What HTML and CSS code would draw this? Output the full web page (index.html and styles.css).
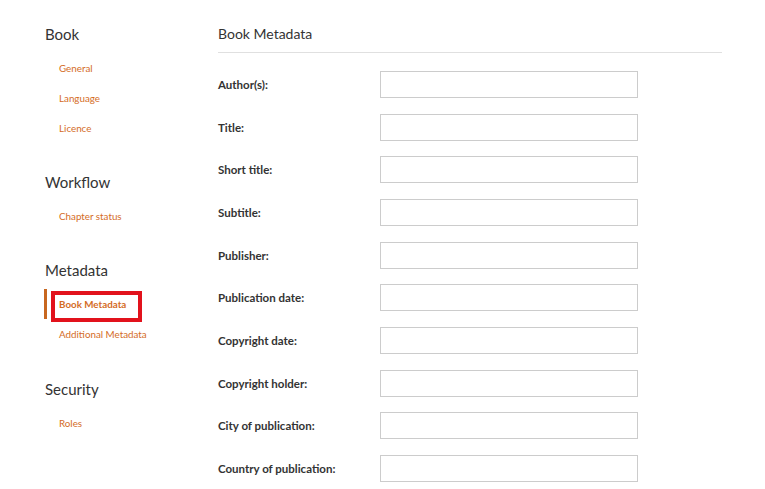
FILE: index.html
```html
<!DOCTYPE html>
<html>
<head>
<meta charset="utf-8">
<link rel="stylesheet" href="styles.css">
</head>
<body>
<div class="page">
  <nav class="sidebar">
    <div class="section">
      <h3 class="section-title">Book</h3>
      <ul class="links">
        <li><a class="link">General</a></li>
        <li><a class="link">Language</a></li>
        <li><a class="link">Licence</a></li>
      </ul>
    </div>
    <div class="section">
      <h3 class="section-title">Workflow</h3>
      <ul class="links">
        <li><a class="link">Chapter status</a></li>
      </ul>
    </div>
    <div class="section">
      <h3 class="section-title">Metadata</h3>
      <ul class="links">
        <li class="active"><a class="link"><span class="highlight">Book Metadata</span></a></li>
        <li><a class="link">Additional Metadata</a></li>
      </ul>
    </div>
    <div class="section last">
      <h3 class="section-title">Security</h3>
      <ul class="links">
        <li><a class="link">Roles</a></li>
      </ul>
    </div>
  </nav>
  <main class="main">
    <h2 class="page-title">Book Metadata</h2>
    <form class="form">
      <label class="label">Author(s):</label><input class="field" type="text">
      <label class="label">Title:</label><input class="field" type="text">
      <label class="label">Short title:</label><input class="field" type="text">
      <label class="label">Subtitle:</label><input class="field" type="text">
      <label class="label">Publisher:</label><input class="field" type="text">
      <label class="label">Publication date:</label><input class="field" type="text">
      <label class="label">Copyright date:</label><input class="field" type="text">
      <label class="label">Copyright holder:</label><input class="field" type="text">
      <label class="label">City of publication:</label><input class="field" type="text">
      <label class="label">Country of publication:</label><input class="field" type="text">
    </form>
  </main>
</div>
</body>
</html>
```
FILE: styles.css
```css
html, body {
  margin: 0;
  padding: 0;
  background: #fff;
  font-family: Lato, "Open Sans", sans-serif;
  color: #333;
}
.page {
  display: flex;
  height: 489px;
  overflow: hidden;
}
.sidebar {
  width: 218px;
  padding-left: 44px;
  box-sizing: border-box;
  flex: none;
}
.section {
  margin-top: 24px;
}
.section + .section {
  margin-top: 29px;
}
.section.last {
  margin-top: 30px;
}
.section-title {
  margin: 0;
  font-size: 15px;
  line-height: 20px;
  font-weight: 400;
  color: #333;
  padding-left: 1px;
}
.links {
  list-style: none;
  margin: 9px 0 0;
  padding: 0;
}
.links li {
  height: 30px;
  display: flex;
  align-items: center;
  border-left: 3px solid transparent;
}
.links li.active {
  border-left-color: #c8671f;
  margin-top: 1px;
}
.link {
  font-size: 9.8px;
  color: #d46c1f;
  padding-left: 12px;
  white-space: nowrap;
}
.active .link {
  font-weight: 700;
}
.highlight {
  position: relative;
}
.highlight::after {
  content: "";
  position: absolute;
  left: -8px;
  top: -7px;
  width: 91px;
  height: 31px;
  box-sizing: border-box;
  border: 4px solid #e2121c;
}
.main {
  width: 504px;
  flex: none;
}
.page-title {
  margin: 24px 0 0;
  font-size: 14px;
  line-height: 20px;
  font-weight: 400;
  color: #333;
  padding-bottom: 8px;
  border-bottom: 1px solid #e0e0e0;
}
.form {
  margin-top: 18px;
  display: grid;
  grid-template-columns: 162px 258px;
  grid-auto-rows: 27px;
  row-gap: 15.67px;
  align-items: center;
}
.label {
  font-size: 11.5px;
  font-weight: 700;
  color: #333;
  white-space: nowrap;
}
.field {
  height: 27px;
  width: 258px;
  box-sizing: border-box;
  border: 1px solid #cccccc;
  margin: 0;
  padding: 0 6px;
  background: #fff;
  outline: none;
}
```
